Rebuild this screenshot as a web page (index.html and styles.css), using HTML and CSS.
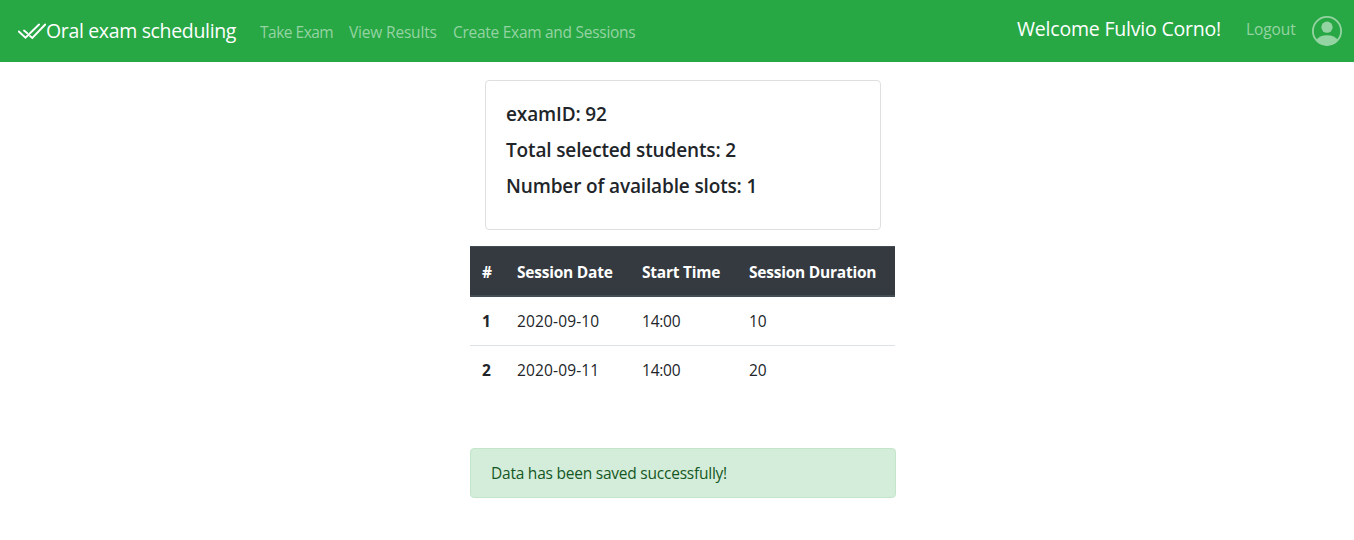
FILE: index.html
```html
<!DOCTYPE html>
<html lang="en">
<head>
<meta charset="utf-8">
<title>Oral exam scheduling</title>
<link rel="stylesheet" href="styles.css">
</head>
<body>
<nav class="navbar">
  <a class="brand">
    <svg class="brand-icon" width="28" height="18" viewBox="0 0 28 18" fill="none" stroke="#fff" stroke-width="1.9" stroke-linecap="round"><path d="M.8 8.500 7.500 14.800 21 1.500"/><path d="M12 13l2.300 1.900L27.200 1.500"/><path d="M6 7.500l3.300 2.800"/></svg>
    <span class="brand-text">Oral exam scheduling</span>
  </a>
  <div class="links">
    <a class="link take">Take Exam</a>
    <a class="link view">View Results</a>
    <a class="link create">Create Exam and Sessions</a>
  </div>
  <div class="user">
    <span class="welcome">Welcome Fulvio Corno!</span>
    <a class="link logout">Logout</a>
    <svg class="avatar" width="30" height="30" viewBox="0 0 30 30"><circle cx="15" cy="15" r="14.1" fill="none" stroke="#94d4a2" stroke-width="1.8"/><circle cx="15" cy="11.2" r="5.6" fill="#94d4a2"/><path d="M4 24.5C6 21 10 19.2 15 19.2S24 21 26 24.5C23.500 27.500 19.500 29.300 15 29.300S6.500 27.500 4 24.500Z" fill="#94d4a2"/></svg>
  </div>
</nav>
<main class="content">
  <section class="card">
    <h5 class="stat">examID: 92</h5>
    <h5 class="stat">Total selected students: 2</h5>
    <h5 class="stat">Number of available slots: 1</h5>
  </section>
  <table class="sessions">
    <colgroup><col class="c-num"><col class="c-date"><col class="c-time"><col class="c-dur"></colgroup>
    <thead><tr><th>#</th><th>Session Date</th><th>Start Time</th><th>Session Duration</th></tr></thead>
    <tbody>
      <tr><th>1</th><td class="date">2020-09-10</td><td>14:00</td><td>10</td></tr>
      <tr><th>2</th><td class="date">2020-09-11</td><td>14:00</td><td>20</td></tr>
    </tbody>
  </table>
  <div class="alert">Data has been saved successfully!</div>
</main>
</body>
</html>
```
FILE: styles.css
```css
* { box-sizing: border-box; }
body {
  margin: 0;
  font: 400 15.5px/24px "Open Sans", "Noto Sans", sans-serif;
  letter-spacing: -0.23px;
  color: #212529;
  background: #fff;
}
.navbar {
  display: flex;
  align-items: center;
  height: 62px;
  padding: 0 12px 0 18px;
  background: #28a745;
  white-space: nowrap;
}
.brand { display: flex; align-items: center; width: 242px; color: #fff; }
.brand-icon { flex: none; margin-top: 1px; }
.brand-text { font-size: 19.5px; letter-spacing: -0.34px; }
.links { display: flex; gap: 16px; padding-top: 1px; }
.link { color: #94d4a2; }
.take { width: 73px; letter-spacing: -0.5px; }
.view { width: 88px; letter-spacing: -0.18px; }
.create { letter-spacing: -0.28px; }
.user { display: flex; align-items: center; margin-left: auto; }
.welcome { width: 229px; font-size: 19.5px; letter-spacing: -0.2px; color: #fff; padding-bottom: 4px; }
.logout { width: 66px; padding-bottom: 5px; letter-spacing: -0.1px; }
.content { width: 426px; margin: 18px 0 0 470px; }
.card {
  width: 396px;
  height: 150px;
  margin-left: 15px;
  padding: 19px 20px;
  border: 1px solid #dfdfdf;
  border-radius: 4px;
}
.stat { margin: 0 0 8px; font-size: 19px; font-weight: 600; line-height: 28px; letter-spacing: -0.14px; }
.sessions {
  width: 425px;
  margin-top: 16px;
  table-layout: fixed;
  border-collapse: collapse;
}
.c-num { width: 35px; }
.c-date { width: 125px; }
.c-time { width: 107px; }
.c-dur { width: 158px; }
.sessions th, .sessions td { height: 49px; padding: 1px 12px 0; text-align: left; white-space: nowrap; border-top: 1px solid #dee2e6; }
.sessions thead th { height: 49.500px; color: #fff; background: #343a40; border-top-color: #454d55; border-bottom: 2px solid #454d55; }
.sessions th { font-weight: 700; }
.sessions .date { letter-spacing: 0.15px; }
.alert {
  height: 50px;
  margin-top: 54px;
  padding: 12px 20px;
  color: #155724;
  background: #d4edda;
  border: 1px solid #c3e6cb;
  border-radius: 4px;
}
```
